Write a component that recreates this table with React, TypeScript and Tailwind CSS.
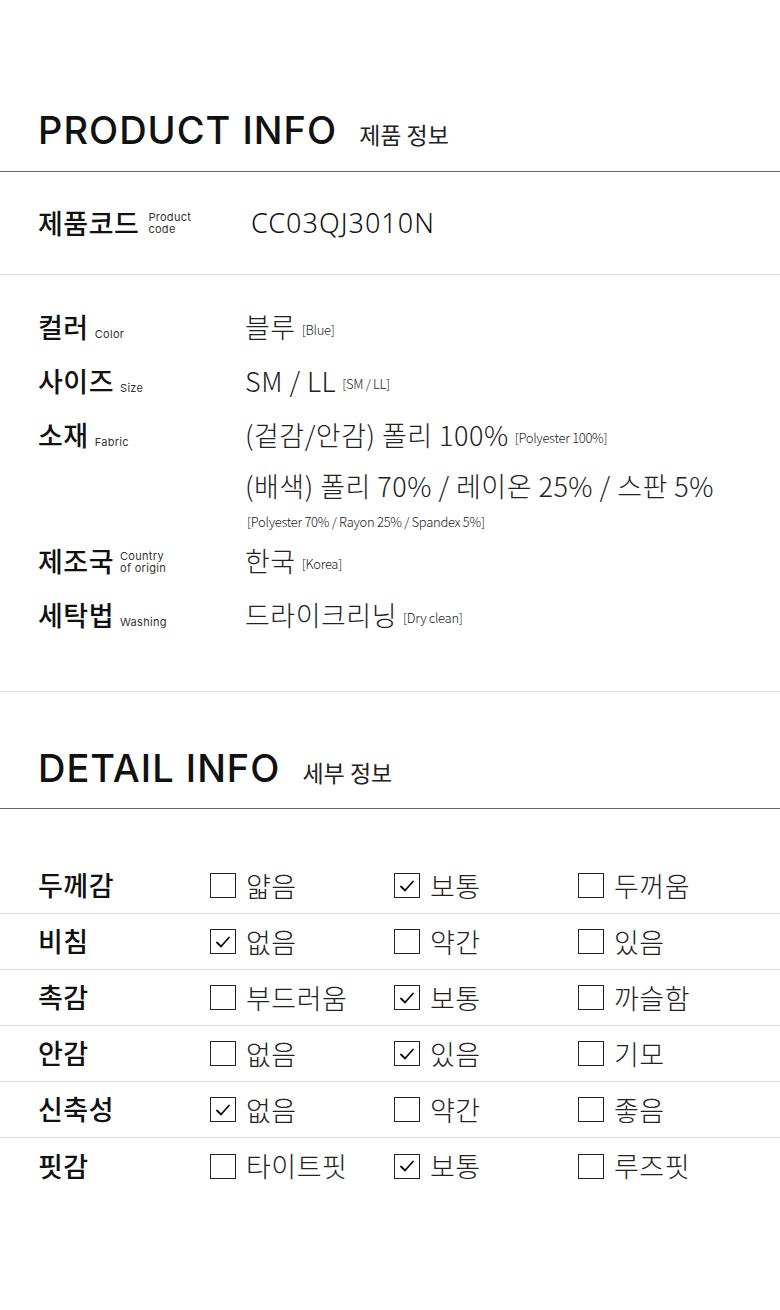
import React from 'react';

const kr = "font-['Noto_Sans_CJK_KR','Noto_Sans',sans-serif]";
const en = "font-['Inter','Noto_Sans',sans-serif]";

type Spec = { ko: string; en: string[]; value: string; note: string };

const specs: Spec[] = [
  { ko: '컬러', en: ['Color'], value: '블루', note: '[Blue]' },
  { ko: '사이즈', en: ['Size'], value: 'SM / LL', note: '[SM / LL]' },
  { ko: '소재', en: ['Fabric'], value: '(겉감/안감) 폴리 100%', note: '[Polyester 100%]' },
];

const specsAfter: Spec[] = [
  { ko: '제조국', en: ['Country', 'of origin'], value: '한국', note: '[Korea]' },
  { ko: '세탁법', en: ['Washing'], value: '드라이크리닝', note: '[Dry clean]' },
];

const details: { label: string; options: string[]; checked: number }[] = [
  { label: '두께감', options: ['얇음', '보통', '두꺼움'], checked: 1 },
  { label: '비침', options: ['없음', '약간', '있음'], checked: 0 },
  { label: '촉감', options: ['부드러움', '보통', '까슬함'], checked: 1 },
  { label: '안감', options: ['없음', '있음', '기모'], checked: 1 },
  { label: '신축성', options: ['없음', '약간', '좋음'], checked: 0 },
  { label: '핏감', options: ['타이트핏', '보통', '루즈핏'], checked: 1 },
];

function SectionTitle({ title, sub }: { title: string; sub: string }) {
  return (
    <div className="flex items-baseline gap-[22px] px-[38px]">
      <h2 className={`${en} text-[38px] font-medium leading-[46px] tracking-[1px] text-[#111]`}>{title}</h2>
      <span className={`${kr} text-[23px] font-normal text-[#222]`}>{sub}</span>
    </div>
  );
}

function SmallLabel({ lines }: { lines: string[] }) {
  return (
    <span className={`${en} flex flex-col text-[11px] leading-[12px] tracking-[0.3px] text-[#333]`}>
      {lines.map((l) => (
        <span key={l} className="block h-[12px]">
          {l}
        </span>
      ))}
    </span>
  );
}

function SpecRow({ s }: { s: Spec }) {
  return (
    <div className="flex h-[54px] items-center px-[38px]">
      <div className="flex w-[207px] items-end gap-[6px]">
        <span className={`${kr} text-[27px] font-medium leading-[32px] tracking-[0.5px] text-[#111]`}>{s.ko}</span>
        <span className="pb-[3px]">
          <SmallLabel lines={s.en} />
        </span>
      </div>
      <span className={`${kr} text-[27px] font-light leading-[32px] tracking-[0.5px] text-[#222]`}>{s.value}</span>
      <span className={`${kr} ml-[6px] mt-[6px] text-[13px] font-light tracking-[-0.3px] text-[#222]`}>{s.note}</span>
    </div>
  );
}

function CheckBox({ on }: { on: boolean }) {
  return (
    <span className="flex h-[25px] w-[26px] shrink-0 items-center justify-center border-[1.5px] border-[#222] bg-white">
      {on && (
        <svg width="16" height="14" viewBox="0 0 16 14" fill="none">
          <path d="M2 7.5 L6 11.5 L14 2.5" stroke="#111" strokeWidth="1.8" strokeLinecap="round" strokeLinejoin="round" />
        </svg>
      )}
    </span>
  );
}

export default function App() {
  return (
    <div className="w-[780px] bg-white text-[#111]">
      {/* product info */}
      <div className="pt-[107px] pb-[18px] border-b border-[#666]">
        <SectionTitle title="PRODUCT INFO" sub="제품 정보" />
      </div>

      <div className="flex h-[103px] items-center border-b border-[#ddd] px-[38px]">
        <div className="flex w-[213px] items-center gap-[9px]">
          <span className={`${kr} text-[27px] font-medium leading-[32px] tracking-[0.5px]`}>제품코드</span>
          <SmallLabel lines={['Product', 'code']} />
        </div>
        <span className="font-['Noto_Sans',sans-serif] text-[27px] font-light tracking-[1px] text-[#111]">CC03QJ3010N</span>
      </div>

      <div className="pt-[25px] pb-[49px] border-b border-[#ddd]">
        {specs.map((s) => (
          <SpecRow key={s.ko} s={s} />
        ))}
        <div className="flex h-[48px] items-center pl-[245px]">
          <span className={`${kr} text-[27px] font-light leading-[32px] tracking-[0.5px] text-[#222]`}>
            (배색) 폴리 70% / 레이온 25% / 스판 5%
          </span>
        </div>
        <div className="flex h-[24px] items-center pl-[247px]">
          <span className={`${kr} text-[13px] font-light tracking-[-0.3px] text-[#222]`}>
            [Polyester 70% / Rayon 25% / Spandex 5%]
          </span>
        </div>
        {specsAfter.map((s) => (
          <SpecRow key={s.ko} s={s} />
        ))}
      </div>

      {/* detail info */}
      <div className="pt-[53px] pb-[17px] border-b border-[#666]">
        <SectionTitle title="DETAIL INFO" sub="세부 정보" />
      </div>

      <div className="pt-[49px] pb-[113px]">
        {details.map((d, i) => (
          <div
            key={d.label}
            className={`grid h-[56px] grid-cols-[210px_184px_184px_1fr] items-center ${
              i < details.length - 1 ? 'border-b border-[#ddd]' : ''
            }`}
          >
            <span className={`${kr} pl-[38px] text-[27px] font-medium tracking-[0.5px] text-[#111]`}>{d.label}</span>
            {d.options.map((o, j) => (
              <div key={o + j} className="flex items-center gap-[10px]">
                <CheckBox on={j === d.checked} />
                <span className={`${kr} text-[27px] font-light leading-[32px] tracking-[0.5px] text-[#222]`}>{o}</span>
              </div>
            ))}
          </div>
        ))}
      </div>
    </div>
  );
}
